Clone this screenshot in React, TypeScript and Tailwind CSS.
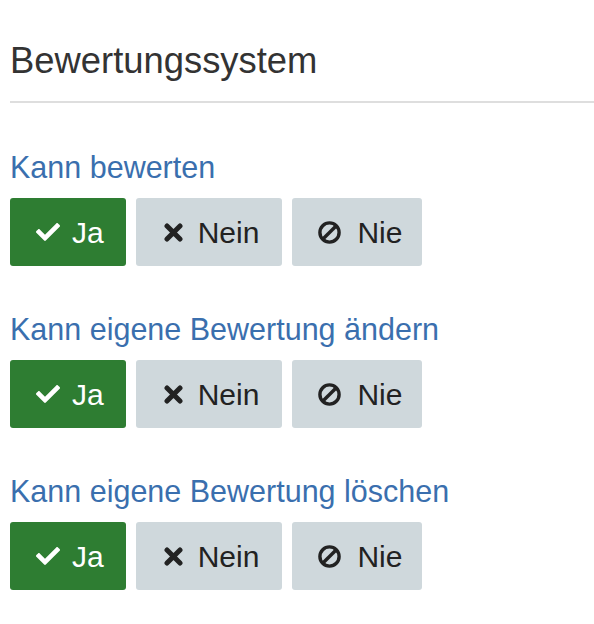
import React from 'react';
import { FaCheck } from 'react-icons/fa';

const rights = ['Kann bewerten', 'Kann eigene Bewertung ändern', 'Kann eigene Bewertung löschen'];

const TimesIcon = () => (
  <svg width="19" height="19" viewBox="0 0 19 19">
    <path d="M3 3L16 16M16 3L3 16" stroke="currentColor" strokeWidth="5" strokeLinecap="round" />
  </svg>
);

const BanIcon = () => (
  <svg width="23" height="23" viewBox="0 0 23 23" fill="none">
    <circle cx="11.5" cy="11.5" r="9.6" stroke="currentColor" strokeWidth="3.4" />
    <path d="M18.3 4.7L4.7 18.3" stroke="currentColor" strokeWidth="3.4" />
  </svg>
);

const Choice = () => {
  return (
    <div className="flex gap-[10px]">
      <button className="flex h-[68px] items-center rounded-[3px] bg-[#2e7d32] pl-[26px] pr-[22px] text-[30px] text-white">
        <FaCheck size={24} />
        <span className="ml-[12px]">Ja</span>
      </button>
      <button className="flex h-[68px] items-center rounded-[3px] bg-[#cfd8dc] pl-[28px] pr-[23px] text-[30px] text-[#222]">
        <TimesIcon />
        <span className="ml-[15px]">Nein</span>
      </button>
      <button className="flex h-[68px] items-center rounded-[3px] bg-[#cfd8dc] pl-[26px] pr-[20px] text-[30px] text-[#222]">
        <BanIcon />
        <span className="ml-[16px]">Nie</span>
      </button>
    </div>
  );
};

const App = () => {
  return (
    <div className="min-h-[624px] bg-white pl-[10px] pt-[39px] font-['Liberation_Sans',Arial,sans-serif]">
      <h1 className="border-b-2 border-[#dedede] pb-[19px] text-[36.4px] leading-[43px] text-[#333]">
        Bewertungssystem
      </h1>
      <div className="mt-[46px] flex flex-col gap-[45px]">
        {rights.map((label) => (
          <div key={label}>
            <div className="mb-[13px] text-[30.5px] leading-[36px] text-[#3a6fae]">{label}</div>
            <Choice />
          </div>
        ))}
      </div>
    </div>
  );
};

export default App;
